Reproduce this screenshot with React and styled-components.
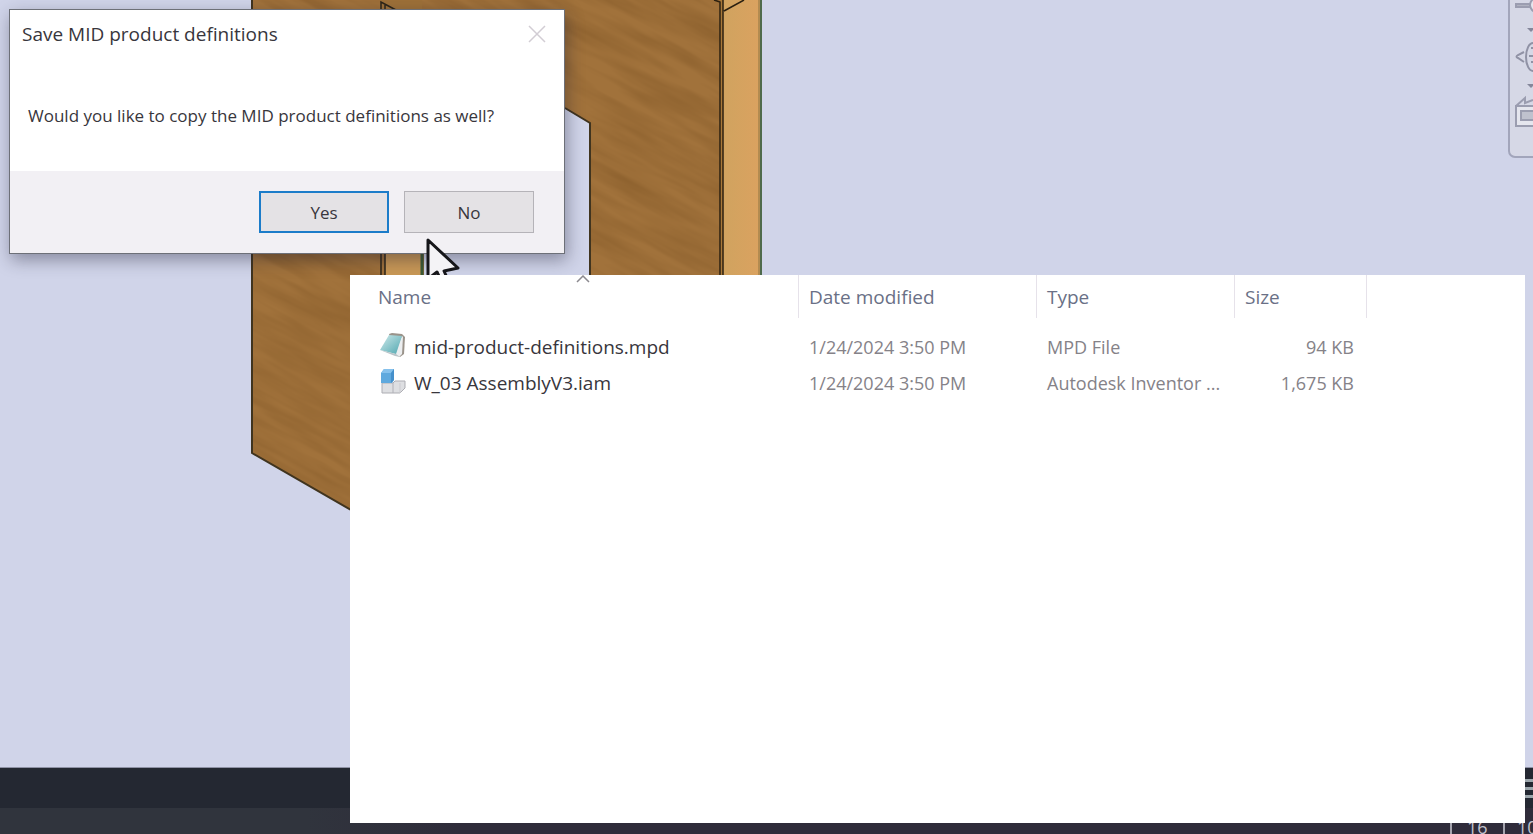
import styled, { createGlobalStyle } from 'styled-components';

const GlobalStyle = createGlobalStyle`
  * {
    box-sizing: border-box;
  }

  body {
    margin: 0;
    overflow: hidden;
    font-family: 'Open Sans', 'Noto Sans', sans-serif;
    color: #38363c;
  }

  button {
    font-family: inherit;
  }
`;

const Desktop = styled.div`
  position: relative;
  display: flex;
  flex-direction: column;
  height: 100vh;
  overflow: hidden;
`;

const Viewport = styled.main`
  position: relative;
  flex: 1;
  min-height: 0;
  overflow: hidden;
  background: #d0d4e9;
  border-bottom: 1px solid #8f92a5;
`;

const Drawing = styled.svg`
  display: block;
`;

const NavBar = styled.nav`
  position: absolute;
  top: -8px;
  right: -24px;
  display: flex;
  flex-direction: column;
  width: 49px;
  height: 166px;
  padding: 0 5px;
  background: #d6d8e6;
  border: 2px solid #a2a5bb;
  border-radius: 7px;
`;

const NavButton = styled.button`
  height: 56px;
  padding: 0;
  border: 0;
  background: none;

  svg {
    display: block;
    overflow: visible;
  }
`;

const TabStrip = styled.div`
  display: flex;
  align-items: center;
  justify-content: flex-end;
  height: 40px;
  background: #242832;
`;

const MenuButton = styled.button`
  display: flex;
  flex-direction: column;
  gap: 5px;
  width: 10px;
  padding: 0;
  border: 0;
  background: none;
`;

const MenuLine = styled.span`
  height: 3px;
  background: #9ca6ac;
`;

const StatusBar = styled.footer`
  display: flex;
  justify-content: flex-end;
  height: 26px;
  overflow: hidden;
  background: linear-gradient(90deg, #30343d 20%, #2f2c3a 30%);
`;

const StatusCell = styled.span`
  width: ${(props) => props.$width};
  padding-left: ${(props) => props.$indent};
  border-left: 2px solid #a5a4ae;
  color: #c3c2cc;
  font-size: 18px;
  line-height: 38px;
`;

const Dialog = styled.section`
  position: absolute;
  top: 9px;
  left: 9px;
  width: 556px;
  background: #fff;
  border: 1px solid #6d7078;
  box-shadow: 2px 6px 16px rgba(30, 30, 50, 0.4);
`;

const TitleBar = styled.header`
  display: flex;
  align-items: center;
  justify-content: space-between;
  height: 48px;
  padding: 0 18px 0 12px;
`;

const DialogTitle = styled.h1`
  margin: 0;
  font-size: 19px;
  font-weight: 400;
`;

const CloseButton = styled.button`
  display: flex;
  padding: 0;
  border: 0;
  background: none;
`;

const Message = styled.p`
  margin: 0;
  padding: 44px 18px 42px;
  font-size: 17px;
  line-height: 27px;
`;

const DialogFooter = styled.footer`
  display: flex;
  justify-content: flex-end;
  gap: 15px;
  padding: 20px 30px;
  background: #f2f0f4;
`;

const DialogButton = styled.button`
  width: 130px;
  height: 42px;
  background: #e4e2e5;
  border: ${(props) => (props.$primary ? '2px solid #1c7cc9' : '1px solid #b5b3b8')};
  color: #38363c;
  font-size: 17px;
`;

const Cursor = styled.svg`
  position: absolute;
  top: 237px;
  left: 424px;
`;

const FileWindow = styled.section`
  position: absolute;
  top: 275px;
  right: 8px;
  bottom: 11px;
  left: 350px;
  padding-left: 18px;
  background: #fff;
`;

const FileTable = styled.table`
  width: 999px;
  border-collapse: separate;
  border-spacing: 0;
  table-layout: fixed;

  tbody::before {
    content: '';
    display: block;
    height: 11px;
  }
`;

const HeaderCell = styled.th`
  position: relative;
  width: ${(props) => props.$width};
  height: 43px;
  padding: 0 10px;
  border-right: 1px solid #e6e2ea;
  color: #6a7086;
  font-size: 19px;
  font-weight: 400;
  text-align: left;
`;

const SortArrow = styled.svg`
  position: absolute;
  top: 0;
  left: calc(50% - 7px);
`;

const Cell = styled.td`
  height: 36px;
  padding: 0 13px 0 10px;
  color: #858288;
  font-size: 18px;
  text-align: ${(props) => props.$align || 'left'};
  white-space: nowrap;
`;

const FileName = styled.span`
  display: flex;
  align-items: center;
  gap: 8px;
  padding-left: 2px;
  color: #38363c;
  font-size: 19px;
`;

const files = [
  {
    name: 'mid-product-definitions.mpd',
    modified: '1/24/2024 3:50 PM',
    type: 'MPD File',
    size: '94 KB',
    icon: 'notepad',
  },
  {
    name: 'W_03 AssemblyV3.iam',
    modified: '1/24/2024 3:50 PM',
    type: 'Autodesk Inventor ...',
    size: '1,675 KB',
    icon: 'assembly',
  },
];

const NotepadIcon = () => (
  <svg width="26" height="28" viewBox="0 0 26 28" aria-hidden="true">
    <defs>
      <linearGradient id="page" x1="0" y1="0" x2="1" y2="1">
        <stop offset="0" stopColor="#cfe9ea" />
        <stop offset="1" stopColor="#4fa7b0" />
      </linearGradient>
    </defs>
    <path d="M9 1 L12 0 L22 1 L25 4 L24 21 L20 24 L15 21 Z" fill="#9a938a" />
    <path d="M22 3 L23 4 L22 21 L19 24 L14 21 Z" fill="#eceef0" />
    <path d="M9 2 L22 3 L16 21 L0 17 Z" fill="url(#page)" />
    <path d="M0 17 L16 21 L20 24 L15 23 Z" fill="#b9c4c8" />
  </svg>
);

const AssemblyIcon = () => (
  <svg width="26" height="28" viewBox="0 0 26 28" aria-hidden="true">
    <path
      d="M2 14 H13 L15 12 H25 V19 L20 24 H2 Z"
      fill="#dedfe2"
      stroke="#adadb3"
      strokeLinejoin="round"
    />
    <path d="M13 14 V24" fill="none" stroke="#b0b0b7" />
    <path d="M20 14 V24" fill="none" stroke="#cbcbd0" />
    <path d="M1 4 L4 0 H14 V11 L12 14 H1 Z" fill="#5fa9de" />
    <path d="M1 4 L4 0 H14 L11 4 Z" fill="#86c1ec" />
    <path d="M11 4 L14 0 V11 L11 14 Z" fill="#4590cb" />
  </svg>
);

const Cabinet = () => (
  <Drawing width="800" height="600" viewBox="0 0 800 600" aria-hidden="true">
    <defs>
      <filter
        id="grain"
        x="0"
        y="0"
        width="100%"
        height="100%"
        colorInterpolationFilters="sRGB"
      >
        <feTurbulence type="fractalNoise" baseFrequency="0.01 0.08" numOctaves="3" seed="9" />
        <feColorMatrix
          values="0 0 0 0 0.4
                  0 0 0 0 0.25
                  0 0 0 0 0.08
                  0.5 0 0 0 -0.15"
        />
      </filter>
      <clipPath id="face">
        <path d="M252 0 H720 V300 H590 V123 L540 94 H424 V552 L252 453 Z" />
      </clipPath>
      <linearGradient id="edge">
        <stop offset="0" stopColor="#d0a35f" />
        <stop offset="1" stopColor="#dba260" />
      </linearGradient>
    </defs>
    <g clipPath="url(#face)">
      <rect x="250" width="480" height="600" fill="#a1723b" />
      <rect
        x="100"
        y="-500"
        width="900"
        height="1100"
        filter="url(#grain)"
        transform="rotate(28)"
      />
    </g>
    <g fill="none" stroke="#40341f" strokeWidth="2">
      <path d="M252 0 V453 L424 552" />
      <path d="M565 108 L590 123 V300" />
    </g>
    <path d="M385 0 H422 V300 H385 Z" fill="#c99856" />
    <path d="M381 0 H422 V20 H381 Z" fill="#9d7038" />
    <path d="M381 300 V2 L396 10 M385 300 V5" fill="none" stroke="#2b2418" strokeWidth="1.5" />
    <path d="M422 240 V300" stroke="#3c5a35" strokeWidth="3" />
    <rect x="720" width="3" height="300" fill="#a87838" />
    <rect x="723" width="38" height="300" fill="url(#edge)" />
    <path
      d="M720 300 V2 L714 0 M723 300 V0 M724 11 L744 0"
      fill="none"
      stroke="#2b2010"
      strokeWidth="1.5"
    />
    <path d="M759 0 V300" stroke="#8c7440" />
    <path d="M761 0 V300" stroke="#4f6a4c" strokeWidth="2" />
  </Drawing>
);

const ViewControls = () => (
  <NavBar aria-label="View controls">
    <NavButton aria-label="Pan">
      <svg width="32" height="56" viewBox="0 0 32 56">
        <g fill="none" stroke="#9b9db0" strokeWidth="2">
          <path d="M1 10 H15 V13 H1 Z" fill="#b0b2c0" />
          <circle cx="22" cy="11" r="7" fill="#e5e6ee" />
        </g>
        <path d="M12 34 H20 L16 38 Z" fill="#85879b" />
      </svg>
    </NavButton>
    <NavButton aria-label="Orbit">
      <svg width="32" height="56" viewBox="0 0 32 56">
        <g fill="none" stroke="#9092a5" strokeWidth="2">
          <ellipse cx="18" cy="7" rx="7" ry="14" />
          <path d="M9 2 L3 5 Q0 7 3 8 L9 12 M14 6 H24 M16 -2 H24 M16 12 H24" />
        </g>
        <path d="M12 34 H20 L16 38 Z" fill="#85879b" />
      </svg>
    </NavButton>
    <NavButton aria-label="Look at">
      <svg width="32" height="56" viewBox="0 0 32 56">
        <g fill="none" stroke="#9b9db0" strokeWidth="2">
          <path d="M1 0 L10 -8 V-3 L18 -6" />
          <path d="M1 0 H30 V20 H1 Z" fill="#e5e6ee" />
          <path d="M6 5 H26 V14 H6 Z" fill="#bfc1ce" />
        </g>
      </svg>
    </NavButton>
  </NavBar>
);

const SaveDialog = () => (
  <Dialog role="dialog" aria-labelledby="dialog_title">
    <TitleBar>
      <DialogTitle id="dialog_title">Save MID product definitions</DialogTitle>
      <CloseButton aria-label="Close">
        <svg width="18" height="18" viewBox="0 0 18 18">
          <path d="M1 1 L17 17 M17 1 L1 17" stroke="#d2cdd4" strokeWidth="1.5" />
        </svg>
      </CloseButton>
    </TitleBar>
    <Message>Would you like to copy the MID product definitions as well?</Message>
    <DialogFooter>
      <DialogButton $primary>Yes</DialogButton>
      <DialogButton>No</DialogButton>
    </DialogFooter>
  </Dialog>
);

const FileList = () => (
  <FileWindow>
    <FileTable>
      <thead>
        <tr>
          <HeaderCell $width="431px" aria-sort="ascending">
            Name
            <SortArrow width="14" height="9" viewBox="0 0 14 9" aria-hidden="true">
              <path d="M1 7 L7 1 L13 7" fill="none" stroke="#8b898f" strokeWidth="1.5" />
            </SortArrow>
          </HeaderCell>
          <HeaderCell $width="238px">Date modified</HeaderCell>
          <HeaderCell $width="198px">Type</HeaderCell>
          <HeaderCell $width="132px">Size</HeaderCell>
        </tr>
      </thead>
      <tbody>
        {files.map((file) => (
          <tr key={file.name}>
            <Cell>
              <FileName>
                {file.icon === 'notepad' ? <NotepadIcon /> : <AssemblyIcon />}
                {file.name}
              </FileName>
            </Cell>
            <Cell>{file.modified}</Cell>
            <Cell>{file.type}</Cell>
            <Cell $align="right">{file.size}</Cell>
          </tr>
        ))}
      </tbody>
    </FileTable>
  </FileWindow>
);

const App = () => (
  <>
    <GlobalStyle />
    <Desktop>
      <Viewport>
        <Cabinet />
        <ViewControls />
      </Viewport>
      <TabStrip>
        <MenuButton aria-label="Open documents">
          <MenuLine />
          <MenuLine />
          <MenuLine />
        </MenuButton>
      </TabStrip>
      <StatusBar>
        <StatusCell $width="53px" $indent="15px">16</StatusCell>
        <StatusCell $width="30px" $indent="12px">10</StatusCell>
      </StatusBar>
      <SaveDialog />
      <Cursor width="38" height="50" viewBox="0 0 38 50" aria-hidden="true">
        <path
          d="M4 3 V42 L13 35 L19 48 L25 45 L20 34 L34 31 Z"
          fill="#f4f3f6"
          stroke="#16161a"
          strokeWidth="3"
          strokeLinejoin="round"
        />
      </Cursor>
      <FileList />
    </Desktop>
  </>
);

export default App;
